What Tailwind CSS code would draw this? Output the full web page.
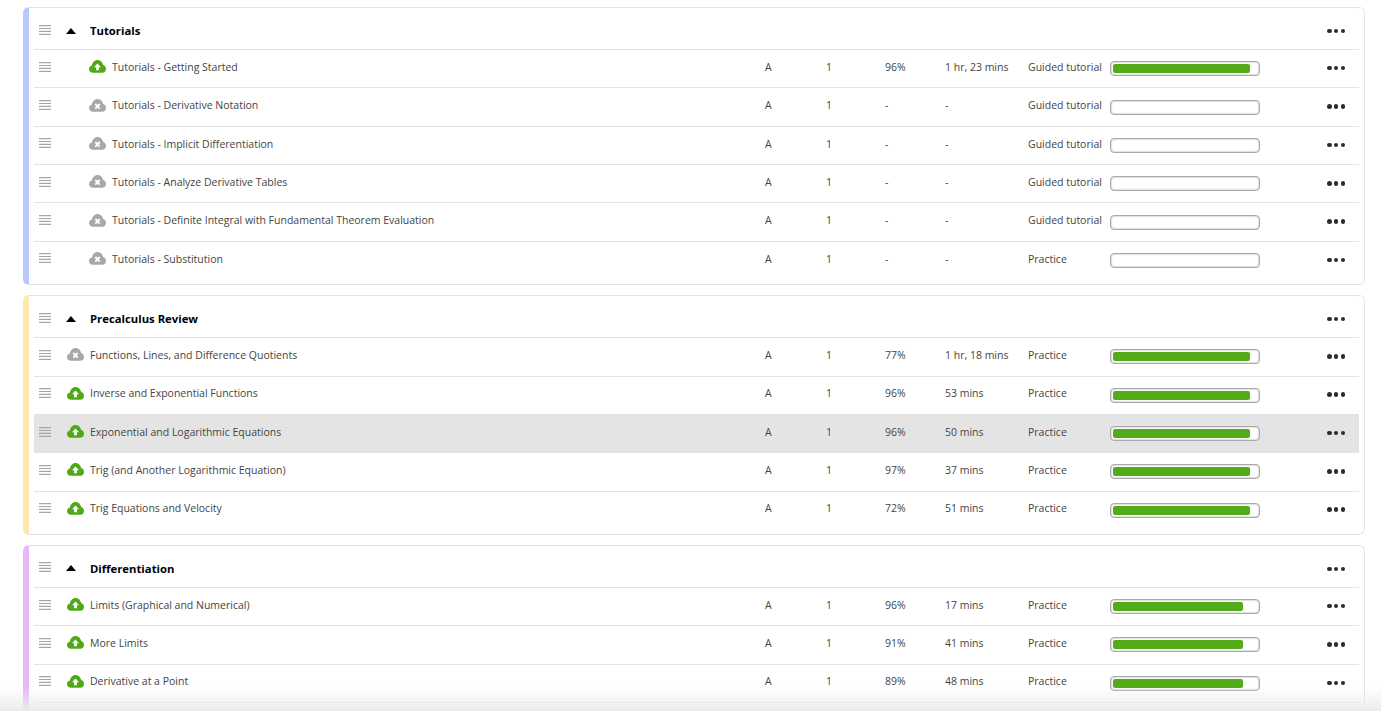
<!DOCTYPE html>
<html lang="en">
<head>
  <meta charset="UTF-8" />
  <title>Course Sections</title>
  <script src="https://cdn.jsdelivr.net/npm/@tailwindcss/browser@4"></script>
</head>
<body class="bg-white h-[711px] overflow-hidden relative font-['Open_Sans',sans-serif] text-[10.5px] text-[#444]">
  <!-- Icons used by the rows -->
  <svg class="hidden">
    <symbol id="cloud-up" viewBox="0 0 17 13">
      <path fill="#4fa916" d="M4 12.8C1.8 12.8 0 11.2 0 9.1 0 7.3 1.2 5.9 2.9 5.5 3.2 2.5 5.6 0 8.6 0 10.9 0 12.8 1.4 13.6 3.5 13.8 3.9 13.9 4.3 14 4.8 15.8 5.4 17 7 17 9 17 11.1 15.4 12.8 13.2 12.8Z" />
      <path fill="#fff" d="M8.5 3.6 12 7.3H9.9V10.2H7.1V7.3H5Z" />
    </symbol>
    <symbol id="cloud-x" viewBox="0 0 17 13">
      <path fill="#a8a8a8" d="M4 12.8C1.8 12.8 0 11.2 0 9.1 0 7.3 1.2 5.9 2.9 5.5 3.2 2.5 5.6 0 8.6 0 10.9 0 12.8 1.4 13.6 3.5 13.8 3.9 13.9 4.3 14 4.8 15.8 5.4 17 7 17 9 17 11.1 15.4 12.8 13.2 12.8Z" />
      <path stroke="#fff" stroke-width="1.9" d="M6.3 5 10.7 9.6M10.7 5 6.3 9.6" />
    </symbol>
    <symbol id="handle" viewBox="0 0 12 10">
      <path fill="#a6a6a6" d="M0 0H12V1.2H0ZM0 2.9H12V4.1H0ZM0 5.8H12V7H0ZM0 8.7H12V9.9H0Z" />
    </symbol>
  </svg>

  <div id="sections" class="pt-[7px] pl-[23px] w-[1365px] flex flex-col gap-[10px]"></div>

  <!-- Fade at the bottom of the window -->
  <div class="absolute left-0 right-0 bottom-0 h-[24px] bg-gradient-to-b from-white/0 to-[#ececec]"></div>

  <script>
    const sections = [
      { title: "Tutorials", bar: "border-l-[#b9c8fb]", indent: true, rows: [
        ["Tutorials - Getting Started", "up", "96%", "1 hr, 23 mins", "Guided tutorial", "w-[137px]"],
        ["Tutorials - Derivative Notation", "x", "-", "-", "Guided tutorial", ""],
        ["Tutorials - Implicit Differentiation", "x", "-", "-", "Guided tutorial", ""],
        ["Tutorials - Analyze Derivative Tables", "x", "-", "-", "Guided tutorial", ""],
        ["Tutorials - Definite Integral with Fundamental Theorem Evaluation", "x", "-", "-", "Guided tutorial", ""],
        ["Tutorials - Substitution", "x", "-", "-", "Practice", ""],
      ]},
      { title: "Precalculus Review", bar: "border-l-[#fde9ae]", rows: [
        ["Functions, Lines, and Difference Quotients", "x", "77%", "1 hr, 18 mins", "Practice", "w-[137px]"],
        ["Inverse and Exponential Functions", "up", "96%", "53 mins", "Practice", "w-[137px]"],
        ["Exponential and Logarithmic Equations", "up", "96%", "50 mins", "Practice", "w-[137px]", true],
        ["Trig (and Another Logarithmic Equation)", "up", "97%", "37 mins", "Practice", "w-[137px]"],
        ["Trig Equations and Velocity", "up", "72%", "51 mins", "Practice", "w-[137px]"],
      ]},
      { title: "Differentiation", bar: "border-l-[#e5b9f7]", more: true, rows: [
        ["Limits (Graphical and Numerical)", "up", "96%", "17 mins", "Practice", "w-[130px]"],
        ["More Limits", "up", "91%", "41 mins", "Practice", "w-[130px]"],
        ["Derivative at a Point", "up", "89%", "48 mins", "Practice", "w-[130px]"],
      ]},
    ];

    const dots = `<div class="flex gap-[2.2px] ml-[67px] mt-[1px]">
      <span class="size-[4.6px] rounded-full bg-[#2b2b2b]"></span>
      <span class="size-[4.6px] rounded-full bg-[#2b2b2b]"></span>
      <span class="size-[4.6px] rounded-full bg-[#2b2b2b]"></span>
    </div>`;

    const handle = `<svg class="w-[12px] h-[10px] ml-[5px] mr-[15px] mb-[2px] shrink-0"><use href="#handle" /></svg>`;

    function rowHtml(row, indent) {
      const [name, status, pct, time, type, fill, active] = row;
      return `<div class="flex items-center h-[38.36px] pb-[2px] border-t border-[#e3e3e3] ${active ? "bg-[#e4e4e4]" : ""}">
        <div class="w-[731px] flex items-center">
          ${handle}
          <svg class="w-[17px] h-[13px] mb-[2px] shrink-0 ${indent ? "ml-[23px]" : "ml-px"}"><use href="#cloud-${status}" /></svg>
          <span class="ml-[6px]">${name}</span>
        </div>
        <div class="w-[61px]">A</div>
        <div class="w-[59px]">1</div>
        <div class="w-[60px]">${pct}</div>
        <div class="w-[83px]">${time}</div>
        <div class="w-[82px]">${type}</div>
        <div class="w-[150px] h-[15px] mt-[2px] bg-white rounded-[4px] border border-[#aaa] shadow-[inset_0_0_2px_#999] p-[2px]">
          ${fill ? `<div class="h-full ${fill} bg-[#53ab19] rounded-[2px]"></div>` : ""}
        </div>
        ${dots}
      </div>`;
    }

    document.getElementById("sections").innerHTML = sections.map((s) => `
      <div class="bg-white rounded-[6px] border border-[#e3e3e3] border-l-[6px] ${s.bar} px-[5px] ${s.more ? "" : "pb-[5px]"}">
        <div class="flex items-center h-[41px] pt-[4px]">
          <div class="w-[731px] flex items-center">
            ${handle}
            <span class="w-0 h-0 border-x-[5.5px] border-x-transparent border-b-[6px] border-b-black"></span>
            <span class="ml-[14px] mt-[2px] text-[11.3px] font-bold text-black">${s.title}</span>
          </div>
          <div class="w-[495px]"></div>
          ${dots}
        </div>
        ${s.rows.map((r) => rowHtml(r, s.indent)).join("")}
        ${s.more ? `<div class="h-[38px] border-t border-[#e3e3e3]"></div>` : ""}
      </div>`).join("");
  </script>
</body>
</html>
